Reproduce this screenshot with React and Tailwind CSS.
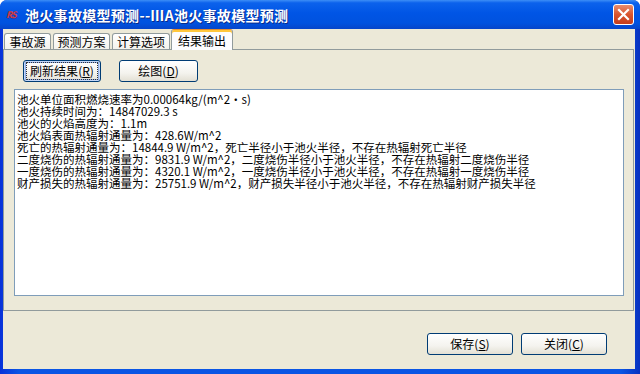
import React from "react";

const lines = [
  "池火单位面积燃烧速率为0.00064kg/(m^2·s)",
  "池火持续时间为：14847029.3 s",
  "池火的火焰高度为：1.1m",
  "池火焰表面热辐射通量为：428.6W/m^2",
  "死亡的热辐射通量为：14844.9 W/m^2，死亡半径小于池火半径，不存在热辐射死亡半径",
  "二度烧伤的热辐射通量为：9831.9 W/m^2，二度烧伤半径小于池火半径，不存在热辐射二度烧伤半径",
  "一度烧伤的热辐射通量为：4320.1 W/m^2，一度烧伤半径小于池火半径，不存在热辐射一度烧伤半径",
  "财产损失的热辐射通量为：25751.9 W/m^2，财产损失半径小于池火半径，不存在热辐射财产损失半径",
];

const tabs = [
  { label: "事故源", w: "w-[47px]" },
  { label: "预测方案", w: "w-[57px]" },
  { label: "计算选项", w: "w-[58px]" },
];

const XpButton = ({ label, hot, w, focused }) => (
  <button
    className={`${w} h-[22px] border border-[#003C74] rounded-[3px] bg-[linear-gradient(180deg,#ffffff_0%,#f4f3ee_60%,#e3e0d4_100%)] text-[12px] text-black flex items-center justify-center ${
      focused ? "shadow-[inset_0_0_0_1px_#c4d7f7,inset_0_0_0_2px_#8eaee9]" : ""
    }`}
  >
    <span
      className={`px-[2px] leading-[14px] ${
        focused ? "outline outline-1 outline-dotted outline-[#333] outline-offset-[1px]" : ""
      }`}
    >
      {label}(<span className="underline">{hot}</span>)
    </span>
  </button>
);

export default function App() {
  return (
    <div
      className="w-[640px] h-[374px] flex flex-col bg-[linear-gradient(90deg,#0831d9_0%,#0a55e4_3%,#0a55e4_97%,#0831c0_100%)] rounded-t-[7px] overflow-hidden"
      style={{ fontFamily: '"Noto Sans CJK SC", "Noto Sans", sans-serif' }}
    >
      {/* title bar */}
      <div className="h-[29px] shrink-0 flex items-center pl-[6px] pr-[6px] bg-[linear-gradient(180deg,#3d8ef6_0%,#0c62ec_10%,#0055e5_45%,#0052df_80%,#0645c9_100%)]">
        <span className="w-[16px] text-[9px] italic font-bold leading-none text-[#d63a3a] [text-shadow:1px_1px_0_#2a3aa8] tracking-[-1px]">
          RS
        </span>
        <span className="ml-[3px] text-[14px] font-bold text-white leading-none tracking-[0.3px] [text-shadow:1px_1px_0_#0a2a8a]">
          池火事故模型预测--ⅢA池火事故模型预测
        </span>
        <div className="flex-1" />
        <div className="w-[21px] h-[21px] rounded-[3px] border border-white bg-[linear-gradient(180deg,#e98d6e_0%,#d9552e_50%,#c53d1c_100%)] flex items-center justify-center">
          <svg width="13" height="13" viewBox="0 0 13 13">
            <path d="M2 2 L11 11 M11 2 L2 11" stroke="#fff" strokeWidth="2.2" strokeLinecap="square" />
          </svg>
        </div>
      </div>

      {/* client */}
      <div className="flex-1 flex flex-col ml-[3px] mr-[5px] mb-[5px] bg-[#ECE9D8]">
        {/* tabs */}
        <div className="h-[20px] shrink-0 flex items-end pl-[1px] gap-[2px] relative z-10">
          {tabs.map((t) => (
            <div
              key={t.label}
              className={`${t.w} h-[16px] border border-b-0 border-[#919B9C] rounded-t-[3px] bg-[linear-gradient(180deg,#ffffff_0%,#f3f2ec_100%)] text-[12px] leading-[15px] text-black flex justify-center`}
            >
              {t.label}
            </div>
          ))}
          <div className="w-[62px] h-[21px] -ml-[1px] -mb-[1px] border border-b-0 border-[#919B9C] border-t-[#e68b2c] rounded-t-[3px] bg-[#FCFCFE] shadow-[inset_0_2px_0_#ffc73c] text-[12px] leading-[18px] text-black flex justify-center pt-[2px]">
            结果输出
          </div>
        </div>

        {/* panel */}
        <div className="h-[262px] shrink-0 mr-[1px] border border-[#919B9C] flex flex-col pt-[10px] pl-[19px]">
          <div className="flex gap-[18px]">
            <XpButton label="刷新结果" hot="R" w="w-[78px]" focused />
            <XpButton label="绘图" hot="D" w="w-[79px]" />
          </div>
          <div className="mt-[7px] -ml-[9px] w-[610px] h-[207px] bg-white border border-[#7F9DB9] pt-[3px] pl-[2px] text-[11.5px] leading-[12px] text-black whitespace-pre">
            {lines.map((l) => (
              <div key={l} className="h-[12px]">
                {l}
              </div>
            ))}
          </div>
        </div>

        {/* bottom buttons */}
        <div className="flex-1 flex justify-end items-start pt-[22px] pr-[28px] gap-[8px]">
          <XpButton label="保存" hot="S" w="w-[86px]" />
          <XpButton label="关闭" hot="C" w="w-[86px]" />
        </div>
      </div>
    </div>
  );
}
